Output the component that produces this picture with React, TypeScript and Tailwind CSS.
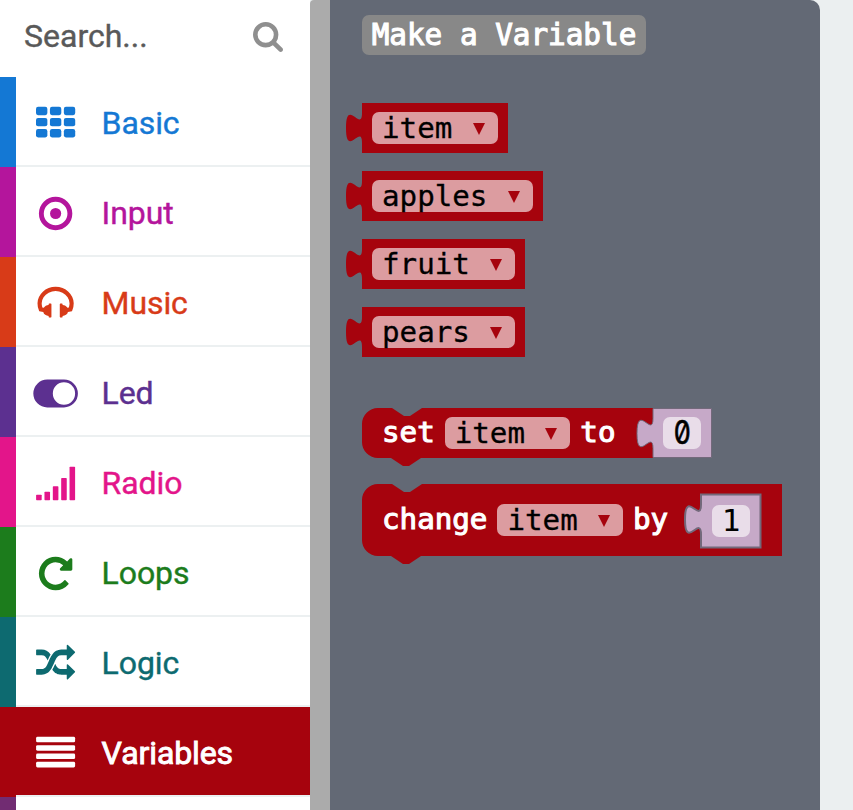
import type { ReactNode } from "react";

const SHUFFLE =
  "M666 481q-60 92-137 273-22-45-37-72.5t-40.5-63.5-51-56.5-63-35-81.5-14.5h-224q-14 0-23-9t-9-23v-192q0-14 9-23t23-9h224q250 0 410 225zm1126 799q0 14-9 23l-320 320q-9 9-23 9-13 0-22.5-9.5t-9.5-22.5v-192q-32 0-85 .5t-81 1-73-1-71-5-64-10.5-63-18.5-58-28.5-59-40-55-53.5-56-69.5q59-93 136-273 22 45 37 72.5t40.5 63.5 51 56.5 63 35 81.5 14.5h256v-192q0-14 9-23t23-9q12 0 24 10l319 319q9 9 9 23zm0-896q0 14-9 23l-320 320q-9 9-23 9-13 0-22.5-9.5t-9.5-22.5v-192h-256q-48 0-87 15t-69 45-51 61.5-45 77.5q-32 62-78 171-29 66-49.5 111t-54 105-64 100-74 83-90 68.5-106.5 42-128 16.5h-224q-14 0-23-9t-9-23v-192q0-14 9-23t23-9h224q48 0 87-15t69-45 51-61.5 45-77.5q32-62 78-171 29-66 49.5-111t54-105 64-100 74-83 90-68.5 106.5-42 128-16.5h256v-192q0-14 9-23t23-9q12 0 24 10l319 319q9 9 9 23z";
const HEADPHONES =
  "M1664 886q0 166-60 314l-20 49-185 33q-22 83-90.5 136.5t-156.5 53.5v32q0 14-9 23t-23 9h-64q-14 0-23-9t-9-23v-576q0-14 9-23t23-9h64q14 0 23 9t9 23v32q71 0 130 35.5t93 95.5l68-12q29-95 29-193 0-148-88-279t-236.5-209-315.5-78-315.5 78-236.5 209-88 279q0 98 29 193l68 12q34-60 93-95.5t130-35.5v-32q0-14 9-23t23-9h64q14 0 23 9t9 23v576q0 14-9 23t-23 9h-64q-14 0-23-9t-9-23v-32q-88 0-156.5-53.5t-90.5-136.5l-185-33-20-49q-60-148-60-314 0-151 67-291t179-242.5 266-163.5 320-61 320 61 266 163.5 179 242.5 67 291z";
const REPEAT =
  "M1536 256v448q0 26-19 45t-45 19h-448q-42 0-59-40-17-39 14-69l138-138q-148-137-349-137-104 0-198.5 40.5t-163.5 109.5-109.5 163.5-40.5 198.5 40.5 198.5 109.5 163.5 163.5 109.5 198.5 40.5q119 0 225-52t179-147q7-10 23-12 15 0 25 9l137 138q9 8 9.5 20.5t-7.5 22.5q-109 132-264 204.5t-327 72.5q-156 0-298-61t-245-164-164-245-61-298 61-298 164-245 245-164 298-61q147 0 284.5 55.5t244.5 156.5l130-129q29-31 70-14 39 17 39 59z";
const SEARCH =
  "M1152 832q0-185-131.5-316.5t-316.5-131.5-316.5 131.5-131.5 316.5 131.5 316.5 316.5 131.5 316.5-131.5 131.5-316.5zm512 832q0 52-38 90t-90 38q-54 0-90-38l-343-342q-179 124-399 124-143 0-273.5-55.5t-225-150-150-225-55.5-273.5 55.5-273.5 150-225 225-150 273.5-55.5 273.5 55.5 225 150 150 225 55.5 273.5q0 220-124 399l343 343q37 37 37 90z";

const icons: Record<string, ReactNode> = {
  Basic: [128, 640, 1152].map((y) =>
    [128, 768, 1408].map((x) => (
      <rect key={`${x}-${y}`} x={x - 5} y={y} width="522" height="384" rx="96" />
    )),
  ),
  Input: (
    <>
      <circle cx="1024" cy="896" r="656" fill="none" stroke="currentColor" strokeWidth="224" />
      <circle cx="1024" cy="896" r="256" />
    </>
  ),
  Music: <path transform="translate(192 0)" d={HEADPHONES} />,
  Led: (
    <path
      fillRule="evenodd"
      d="M640 256h768a640 640 0 0 1 0 1280h-768a640 640 0 0 1 0-1280zM1408 384a512 512 0 1 0 0 1024a512 512 0 1 0 0-1024z"
    />
  ),
  Radio: [1280, 1152, 896, 512, 0].map((y, i) => (
    <rect key={y} x={128 + i * 384} y={y + 128} width="256" height={1536 - y} rx="32" />
  )),
  Loops: <path transform="translate(256 0)" d={REPEAT} />,
  Logic: <path transform="translate(128 0)" d={SHUFFLE} />,
  Variables: [128, 512, 896, 1280].map((y) => (
    <rect key={y} x="128" y={y} width="1792" height="256" rx="64" />
  )),
};

const categories = [
  { name: "Basic", strip: "bg-[#1478d4]", text: "text-[#1478d4]" },
  { name: "Input", strip: "bg-[#b4159c]", text: "text-[#b4159c]" },
  { name: "Music", strip: "bg-[#d83b18]", text: "text-[#d83b18]" },
  { name: "Led", strip: "bg-[#5c3090]", text: "text-[#5c3090]" },
  { name: "Radio", strip: "bg-[#e3158a]", text: "text-[#e3158a]" },
  { name: "Loops", strip: "bg-[#1c7c1c]", text: "text-[#1c7c1c]" },
  { name: "Logic", strip: "bg-[#0d6a70]", text: "text-[#0d6a70]" },
  { name: "Variables", strip: "bg-[#a6030d]", text: "text-white", selected: true },
];

function Category({ name, strip, text, selected }: (typeof categories)[number]) {
  return (
    <div className="flex h-[90px] shrink-0">
      <div className={`w-4 ${strip}`} />
      <div
        className={`flex flex-1 items-center border-b-2 border-[#ecf0f1] pl-[17px] pt-[4px] ${text} ${
          selected ? "bg-[#a6030d] bg-clip-padding" : ""
        }`}
      >
        <svg className="h-[39px] w-[45px]" viewBox="-5 0 2048 1792" fill="currentColor">
          {icons[name]}
        </svg>
        <span
          className={`ml-[23.6px] text-[32px] leading-10 tracking-[-0.1px] ${
            selected
              ? "[-webkit-text-stroke:0.9px_currentColor]"
              : "[-webkit-text-stroke:0.4px_currentColor]"
          }`}
        >
          {name}
        </span>
      </div>
    </div>
  );
}

function Dropdown({ name }: { name: string }) {
  return (
    <div className="flex h-8 items-center rounded-[7px] bg-[#dc9ca0] pl-[10px] pr-[13px]">
      <span className="text-[29.2px] leading-8 text-black [-webkit-text-stroke:0.3px_black]">
        {name}
      </span>
      <svg className="ml-[20.3px] mt-[1.5px] h-3 w-3" viewBox="0 0 12 12">
        <path d="M0 0h12L6 12z" fill="#a6030d" />
      </svg>
    </div>
  );
}

function Reporter({ name }: { name: string }) {
  return (
    <div className="relative flex h-[50px] items-center self-start bg-[#a6030d] px-[10px]">
      <svg className="absolute -left-4 top-0 h-[50px] w-[17px]" viewBox="0 0 17 50">
        <path d="M17 10H16c0 20-16-16-16 15s16-5 16 15H17z" fill="#a6030d" />
      </svg>
      <Dropdown name={name} />
    </div>
  );
}

function Label({ children }: { children: ReactNode }) {
  return (
    <span className="-mt-px text-[29.2px] leading-8 text-white [-webkit-text-stroke:1.1px_white]">
      {children}
    </span>
  );
}

function NumberBlock({ value, width, height }: { value: string; width: number; height: number }) {
  return (
    <div className="relative flex items-center justify-center" style={{ width, height }}>
      <svg
        className="absolute -left-[17px] top-0 overflow-visible"
        width={width + 17}
        height={height}
      >
        <path
          d={`M17 .5H${width + 16.5}V${height - 0.5}H17V40.500c0-20-16 16-16-15s16 5 16-15z`}
          fill="#c6a9c8"
          stroke="#73697b"
          strokeWidth={height > 50 ? 2 : 1}
        />
      </svg>
      <div className="relative flex h-8 w-[38px] items-center justify-center rounded-[7px] bg-[#e9dde9]">
        {value === "0" ? (
          <span className="scale-x-[0.83] font-[Inter] text-[32.5px] leading-8 [-webkit-text-stroke:0.6px_black] [font-feature-settings:'zero']">
            0
          </span>
        ) : (
          <span className="-mt-px text-[31px] leading-8">{value}</span>
        )}
      </div>
    </div>
  );
}

function StatementShape({ width, height }: { width: number; height: number }) {
  return (
    <svg className="absolute left-0 top-0 overflow-visible" width={width} height={height}>
      <path
        d={`M0 16A16 16 0 0 1 16 0H30l12 8h6l12-8H${width}V${height}H59l-12 8h-6l-12-8H16A16 16 0 0 1 0 ${height - 16}z`}
        fill="#a6030d"
      />
    </svg>
  );
}

export default function App() {
  return (
    <div className="flex h-[810px] w-[853px] overflow-hidden bg-[#ebeff0] font-['Roboto',sans-serif]">
      <aside className="flex w-[310px] shrink-0 flex-col bg-white">
        <div className="flex h-[77px] shrink-0 items-start justify-between pl-6 pr-[27px]">
          <span className="mt-4 text-[32px] leading-10 text-[#595959] [-webkit-text-stroke:0.4px_currentColor]">
            Search...
          </span>
          <svg className="mt-[21.5px] h-[30px] w-[30px]" viewBox="0 128 1664 1664" fill="#8f8f8f">
            <path d={SEARCH} />
          </svg>
        </div>
        {categories.map((c) => (
          <Category key={c.name} {...c} />
        ))}
        <div className="h-[13px] w-4 bg-[#712c72]" />
      </aside>
      <div className="w-5 shrink-0 rounded-tl-[4px] bg-[#ababab]" />
      <main className="flex w-[490px] shrink-0 flex-col rounded-tr-[10px] bg-[#636975] pl-8 pt-[15px] font-['DejaVu_Sans_Mono',monospace]">
        <button className="flex h-10 w-[284px] items-center justify-center rounded-[7px] bg-[#888888] pb-px text-[29.3px] leading-8 text-white [-webkit-text-stroke:1.1px_white]">
          Make a Variable
        </button>
        <div className="mt-[48.300px] flex flex-col gap-[18px]">
          {["item", "apples", "fruit", "pears"].map((n) => (
            <Reporter key={n} name={n} />
          ))}
        </div>
        <div className="relative mt-[50.500px] flex h-[50px] items-center self-start pl-5">
          <StatementShape width={291} height={50} />
          <div className="relative flex items-center gap-[10px]">
            <Label>set</Label>
            <Dropdown name="item" />
            <Label>to</Label>
          </div>
          <div className="ml-[37.5px]">
            <NumberBlock value="0" width={59} height={50} />
          </div>
        </div>
        <div className="relative mt-[26px] flex h-[72px] w-[420px] items-center pl-5">
          <StatementShape width={420} height={72} />
          <div className="relative flex items-center gap-[10px]">
            <Label>change</Label>
            <Dropdown name="item" />
            <Label>by</Label>
          </div>
          <div className="ml-[32.8px] mt-[2px]">
            <NumberBlock value="1" width={60} height={54} />
          </div>
        </div>
      </main>
    </div>
  );
}
